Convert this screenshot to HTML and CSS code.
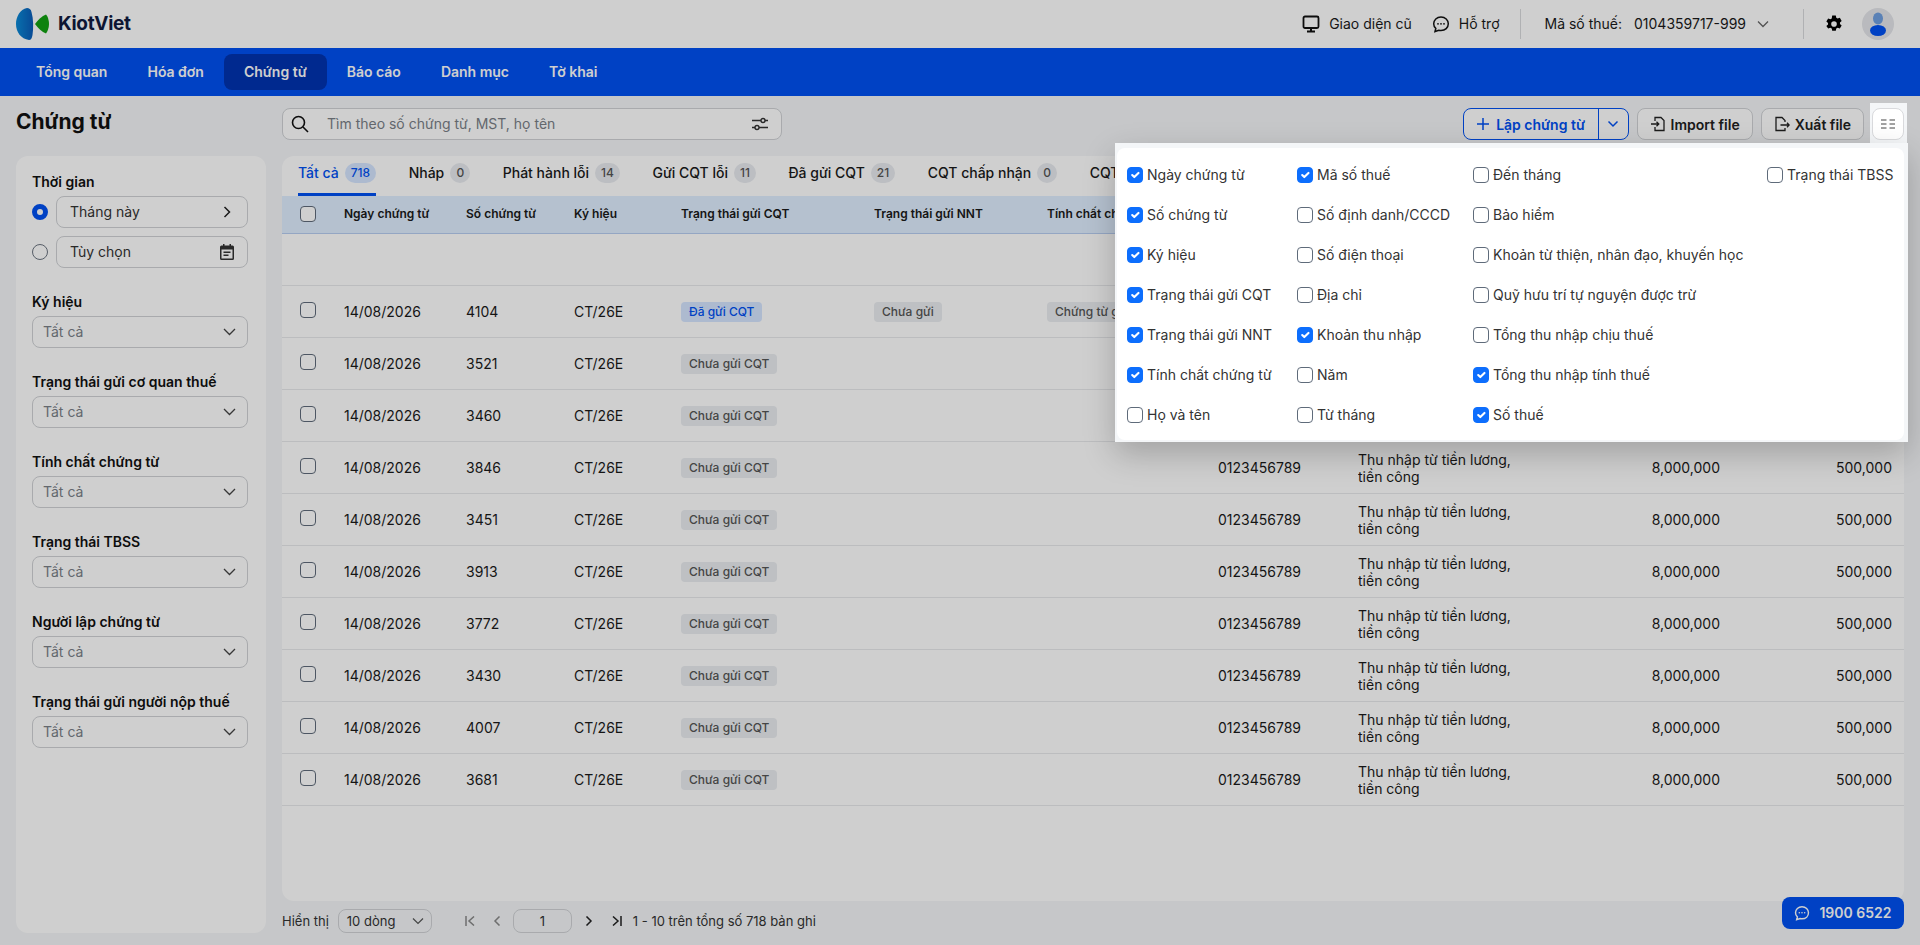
FILE: index.html
```html
<!DOCTYPE html>
<html lang="vi">
<head>
    <meta charset="UTF-8">
    <title>Chứng từ</title>
    <link rel="stylesheet" href="styles.css">
</head>
<body>

    <header class="topbar">
        <div class="logo">
            <svg width="34" height="32" viewBox="0 0 34 32">
                <defs>
                    <linearGradient id="logo-blue" x1="0" y1="0" x2="1" y2="0">
                        <stop offset="0" stop-color="#0a8ad6"/>
                        <stop offset="1" stop-color="#0b5cb8"/>
                    </linearGradient>
                </defs>
                <path fill="url(#logo-blue)" d="M11 0C4 1 0 9 0 16c0 8 5 15 13 16 2 0 3-2 3.500-5 1-7 1-16-1-23C15 1 13 0 11 0z"/>
                <path fill="#12a112" d="M19 16c3-4 7-8 11-9.500 1.500 1.500 3 5.500 3 9.500s-1.500 7.500-3 9.500C26 24 22 20 19 16z"/>
            </svg>
            <span>KiotViet</span>
        </div>
        <div class="topbar-right">
            <a class="top-link">
                <svg width="18" height="18" viewBox="0 0 18 18" fill="none" stroke="#111" stroke-width="1.800"><rect x="1.500" y="1.500" width="15" height="11.500" rx="1.500"/><path d="M9 13v3M5 16.500h8" stroke-width="2"/></svg>
                Giao diện cũ
            </a>
            <a class="top-link">
                <svg width="18" height="18" viewBox="0 0 18 18" fill="none" stroke="#111" stroke-width="1.500"><path d="M9 2c4.200 0 7.300 2.900 7.300 6.800S13.200 15.500 9 15.500c-.8 0-1.500-.1-2.200-.3L3 16.500l.8-3.100C2.400 12.200 1.700 10.600 1.700 8.800 1.700 4.900 4.800 2 9 2z"/><circle cx="6" cy="8.800" r=".9" fill="#111" stroke="none"/><circle cx="9" cy="8.800" r=".9" fill="#111" stroke="none"/><circle cx="12" cy="8.800" r=".9" fill="#111" stroke="none"/></svg>
                Hỗ trợ
            </a>
            <span class="top-divider"></span>
            <div class="tax-code">
                <span>Mã số thuế:</span>
                <span class="tax-number">0104359717-999</span>
                <svg width="12" height="8" viewBox="0 0 12 8" fill="none" stroke="#666" stroke-width="1.300"><path d="M1 1.500l5 5 5-5"/></svg>
            </div>
            <span class="top-divider divider-right"></span>
            <svg class="gear" width="18" height="18" viewBox="0 0 16 16"><path fill="#000" fill-rule="evenodd" d="M6.400.5h3.200l.4 2 1.200.7 2-.7 1.600 2.800-1.500 1.300v1.400l1.500 1.300-1.600 2.800-2-.7-1.200.7-.4 2H6.400l-.4-2-1.200-.7-2 .7L1.200 9.800l1.500-1.300V7.100L1.200 5.800l1.600-2.800 2 .7L6 3zM8 5.500a2.500 2.500 0 1 0 0 5 2.500 2.500 0 0 0 0-5z"/></svg>
            <div class="avatar">
                <svg width="20" height="24" viewBox="0 0 20 24"><ellipse cx="10" cy="6.500" rx="5" ry="6" fill="#6f9fe0"/><ellipse cx="10" cy="18.500" rx="8" ry="5.500" fill="#0051f2"/></svg>
            </div>
        </div>
    </header>

    <nav class="mainnav">
        <a>Tổng quan</a>
        <a>Hóa đơn</a>
        <a class="active">Chứng từ</a>
        <a>Báo cáo</a>
        <a>Danh mục</a>
        <a>Tờ khai</a>
    </nav>

    <div class="page">
        <div class="page-head">
            <h1>Chứng từ</h1>
            <div class="toolbar">
                <div class="search">
                    <svg width="18" height="18" viewBox="0 0 18 18" fill="none" stroke="#111" stroke-width="1.600"><circle cx="7.500" cy="7.500" r="6"/><path d="M12 12l5 5"/></svg>
                    <span class="search-text">Tìm theo số chứng từ, MST, họ tên</span>
                    <svg width="18" height="14" viewBox="0 0 18 14" fill="none" stroke="#333" stroke-width="1.400"><path d="M1 3.500h9M14 3.500h3M1 10.500h3M8 10.500h9"/><circle cx="12" cy="3.500" r="2"/><circle cx="6" cy="10.500" r="2"/></svg>
                </div>
                <div class="actions">
                    <div class="split-btn">
                        <button class="split-main">
                            <svg width="14" height="14" viewBox="0 0 14 14" stroke="#0051f2" stroke-width="1.500"><path d="M7 1v12M1 7h12"/></svg>
                            Lập chứng từ
                        </button>
                        <button class="split-caret">
                            <svg width="12" height="8" viewBox="0 0 12 8" fill="none" stroke="#0051f2" stroke-width="1.500"><path d="M1.500 1.500L6 6l4.500-4.500"/></svg>
                        </button>
                    </div>
                    <button class="btn">
                        <svg width="16" height="16" viewBox="0 0 16 16" fill="none" stroke="#222" stroke-width="1.300"><path d="M5 5V1.500h6l3 3v10H5V11"/><path d="M1 8h7.500M6.500 5.800L8.800 8l-2.300 2.200"/></svg>
                        Import file
                    </button>
                    <button class="btn">
                        <svg width="16" height="16" viewBox="0 0 16 16" fill="none" stroke="#222" stroke-width="1.300"><path d="M11 6V4.500l-3-3H2v13h9V12"/><path d="M6.500 9H15M13 6.800L15.200 9 13 11.200"/></svg>
                        Xuất file
                    </button>
                    <div class="col-btn-wrap">
                        <button class="col-btn">
                            <svg width="14" height="10" viewBox="0 0 14 10" stroke="#444" stroke-width="1"><path d="M0 1h5.500M8.500 1H14M0 5h5.500M8.500 5H14M0 9h5.500M8.500 9H14"/></svg>
                        </button>
                    </div>
                </div>
            </div>
        </div>

        <div class="page-body">
            <aside class="filters">
                <div class="filter-group">
                    <label class="filter-label">Thời gian</label>
                    <div class="radio-row">
                        <span class="radio checked"></span>
                        <div class="field dark">Tháng này
                            <svg class="arrow" width="8" height="12" viewBox="0 0 8 12" fill="none" stroke="#222" stroke-width="1.500"><path d="M1.500 1L6.500 6l-5 5"/></svg>
                        </div>
                    </div>
                    <div class="radio-row">
                        <span class="radio"></span>
                        <div class="field dark">Tùy chọn
                            <svg width="14" height="16" viewBox="0 0 14 16"><path fill="#333" fill-rule="evenodd" d="M3 0h1.500v1.500h5V0H11v1.500h1.500A1.500 1.500 0 0 1 14 3v11.500a1.500 1.500 0 0 1-1.500 1.500h-11A1.500 1.500 0 0 1 0 14.500V3a1.500 1.500 0 0 1 1.500-1.500H3zM1.500 5.500v9h11v-9zM3.500 7.500h7V9h-7zM3.500 10.500h5V12h-5z"/></svg>
                        </div>
                    </div>
                </div>
                <div class="filter-group">
                    <label class="filter-label">Ký hiệu</label>
                    <div class="field">Tất cả
                        <svg width="13" height="8" viewBox="0 0 13 8" fill="none" stroke="#444" stroke-width="1.300"><path d="M1 1l5.500 5.500L12 1"/></svg>
                    </div>
                </div>
                <div class="filter-group">
                    <label class="filter-label">Trạng thái gửi cơ quan thuế</label>
                    <div class="field">Tất cả
                        <svg width="13" height="8" viewBox="0 0 13 8" fill="none" stroke="#444" stroke-width="1.300"><path d="M1 1l5.500 5.500L12 1"/></svg>
                    </div>
                </div>
                <div class="filter-group">
                    <label class="filter-label">Tính chất chứng từ</label>
                    <div class="field">Tất cả
                        <svg width="13" height="8" viewBox="0 0 13 8" fill="none" stroke="#444" stroke-width="1.300"><path d="M1 1l5.500 5.500L12 1"/></svg>
                    </div>
                </div>
                <div class="filter-group">
                    <label class="filter-label">Trạng thái TBSS</label>
                    <div class="field">Tất cả
                        <svg width="13" height="8" viewBox="0 0 13 8" fill="none" stroke="#444" stroke-width="1.300"><path d="M1 1l5.500 5.500L12 1"/></svg>
                    </div>
                </div>
                <div class="filter-group">
                    <label class="filter-label">Người lập chứng từ</label>
                    <div class="field">Tất cả
                        <svg width="13" height="8" viewBox="0 0 13 8" fill="none" stroke="#444" stroke-width="1.300"><path d="M1 1l5.500 5.500L12 1"/></svg>
                    </div>
                </div>
                <div class="filter-group">
                    <label class="filter-label">Trạng thái gửi người nộp thuế</label>
                    <div class="field">Tất cả
                        <svg width="13" height="8" viewBox="0 0 13 8" fill="none" stroke="#444" stroke-width="1.300"><path d="M1 1l5.500 5.500L12 1"/></svg>
                    </div>
                </div>
            </aside>

            <main class="content">
                <div class="card">
                    <div class="tabs">
                        <a class="tab active">Tất cả <span class="count">718</span></a>
                        <a class="tab">Nháp <span class="count">0</span></a>
                        <a class="tab">Phát hành lỗi <span class="count">14</span></a>
                        <a class="tab">Gửi CQT lỗi <span class="count">11</span></a>
                        <a class="tab">Đã gửi CQT <span class="count">21</span></a>
                        <a class="tab">CQT chấp nhận <span class="count">0</span></a>
                        <a class="tab">CQT từ chối <span class="count">0</span></a>
                    </div>
                    <table class="grid">
                        <colgroup>
                            <col class="c-check"><col class="c-date"><col class="c-no"><col class="c-sign">
                            <col class="c-cqt"><col class="c-nnt"><col class="c-kind"><col class="c-mst">
                            <col class="c-income"><col class="c-total"><col class="c-tax">
                        </colgroup>
                        <thead>
                            <tr>
                                <th class="cell-check"><input type="checkbox"></th>
                                <th>Ngày chứng từ</th>
                                <th>Số chứng từ</th>
                                <th>Ký hiệu</th>
                                <th>Trạng thái gửi CQT</th>
                                <th>Trạng thái gửi NNT</th>
                                <th>Tính chất chứng từ</th>
                                <th>Mã số thuế</th>
                                <th>Khoản thu nhập</th>
                                <th class="num">Tổng thu nhập tính thuế</th>
                                <th class="num">Số thuế</th>
                            </tr>
                        </thead>
                        <tbody>
                            <tr class="filter-row"><td colspan="11"></td></tr>
                            <tr>
                                <td class="cell-check"><input type="checkbox"></td>
                                <td>14/08/2026</td><td>4104</td><td>CT/26E</td>
                                <td><span class="tag blue">Đã gửi CQT</span></td>
                                <td><span class="tag">Chưa gửi</span></td>
                                <td><span class="tag">Chứng từ gốc</span></td>
                                <td>0123456789</td>
                                <td>Thu nhập từ tiền lương,<br>tiền công</td>
                                <td class="num">8,000,000</td><td class="num">500,000</td>
                            </tr>
                            <tr>
                                <td class="cell-check"><input type="checkbox"></td>
                                <td>14/08/2026</td><td>3521</td><td>CT/26E</td>
                                <td><span class="tag">Chưa gửi CQT</span></td><td></td><td></td>
                                <td>0123456789</td>
                                <td>Thu nhập từ tiền lương,<br>tiền công</td>
                                <td class="num">8,000,000</td><td class="num">500,000</td>
                            </tr>
                            <tr>
                                <td class="cell-check"><input type="checkbox"></td>
                                <td>14/08/2026</td><td>3460</td><td>CT/26E</td>
                                <td><span class="tag">Chưa gửi CQT</span></td><td></td><td></td>
                                <td>0123456789</td>
                                <td>Thu nhập từ tiền lương,<br>tiền công</td>
                                <td class="num">8,000,000</td><td class="num">500,000</td>
                            </tr>
                            <tr>
                                <td class="cell-check"><input type="checkbox"></td>
                                <td>14/08/2026</td><td>3846</td><td>CT/26E</td>
                                <td><span class="tag">Chưa gửi CQT</span></td><td></td><td></td>
                                <td>0123456789</td>
                                <td>Thu nhập từ tiền lương,<br>tiền công</td>
                                <td class="num">8,000,000</td><td class="num">500,000</td>
                            </tr>
                            <tr>
                                <td class="cell-check"><input type="checkbox"></td>
                                <td>14/08/2026</td><td>3451</td><td>CT/26E</td>
                                <td><span class="tag">Chưa gửi CQT</span></td><td></td><td></td>
                                <td>0123456789</td>
                                <td>Thu nhập từ tiền lương,<br>tiền công</td>
                                <td class="num">8,000,000</td><td class="num">500,000</td>
                            </tr>
                            <tr>
                                <td class="cell-check"><input type="checkbox"></td>
                                <td>14/08/2026</td><td>3913</td><td>CT/26E</td>
                                <td><span class="tag">Chưa gửi CQT</span></td><td></td><td></td>
                                <td>0123456789</td>
                                <td>Thu nhập từ tiền lương,<br>tiền công</td>
                                <td class="num">8,000,000</td><td class="num">500,000</td>
                            </tr>
                            <tr>
                                <td class="cell-check"><input type="checkbox"></td>
                                <td>14/08/2026</td><td>3772</td><td>CT/26E</td>
                                <td><span class="tag">Chưa gửi CQT</span></td><td></td><td></td>
                                <td>0123456789</td>
                                <td>Thu nhập từ tiền lương,<br>tiền công</td>
                                <td class="num">8,000,000</td><td class="num">500,000</td>
                            </tr>
                            <tr>
                                <td class="cell-check"><input type="checkbox"></td>
                                <td>14/08/2026</td><td>3430</td><td>CT/26E</td>
                                <td><span class="tag">Chưa gửi CQT</span></td><td></td><td></td>
                                <td>0123456789</td>
                                <td>Thu nhập từ tiền lương,<br>tiền công</td>
                                <td class="num">8,000,000</td><td class="num">500,000</td>
                            </tr>
                            <tr>
                                <td class="cell-check"><input type="checkbox"></td>
                                <td>14/08/2026</td><td>4007</td><td>CT/26E</td>
                                <td><span class="tag">Chưa gửi CQT</span></td><td></td><td></td>
                                <td>0123456789</td>
                                <td>Thu nhập từ tiền lương,<br>tiền công</td>
                                <td class="num">8,000,000</td><td class="num">500,000</td>
                            </tr>
                            <tr>
                                <td class="cell-check"><input type="checkbox"></td>
                                <td>14/08/2026</td><td>3681</td><td>CT/26E</td>
                                <td><span class="tag">Chưa gửi CQT</span></td><td></td><td></td>
                                <td>0123456789</td>
                                <td>Thu nhập từ tiền lương,<br>tiền công</td>
                                <td class="num">8,000,000</td><td class="num">500,000</td>
                            </tr>
                        </tbody>
                    </table>
                </div>

                <div class="pager">
                    <span>Hiển thị</span>
                    <div class="pager-select">10 dòng
                        <svg width="12" height="8" viewBox="0 0 12 8" fill="none" stroke="#555" stroke-width="1.200"><path d="M1 1.500l5 5 5-5"/></svg>
                    </div>
                    <svg class="pager-first" width="10" height="10" viewBox="0 0 10 10" fill="none" stroke="#888" stroke-width="1.500"><path d="M1 0v10M9 .5L4 5l5 4.500"/></svg>
                    <svg class="pager-prev" width="8" height="10" viewBox="0 0 8 10" fill="none" stroke="#888" stroke-width="1.500"><path d="M6.500.5L2 5l4.500 4.500"/></svg>
                    <div class="pager-input">1</div>
                    <svg class="pager-next" width="8" height="10" viewBox="0 0 8 10" fill="none" stroke="#222" stroke-width="1.500"><path d="M1.500.5L6 5 1.500 9.500"/></svg>
                    <svg class="pager-last" width="10" height="10" viewBox="0 0 10 10" fill="none" stroke="#222" stroke-width="1.500"><path d="M9 0v10M1 .5L6 5 1 9.500"/></svg>
                    <span class="pager-total">1 - 10 trên tổng số 718 bản ghi</span>
                </div>
            </main>
        </div>
    </div>

    <a class="hotline">
        <svg width="16" height="16" viewBox="0 0 18 18" fill="none" stroke="#fff" stroke-width="1.600"><path d="M9 2c4.200 0 7.300 2.900 7.300 6.800S13.200 15.500 9 15.500c-.8 0-1.500-.1-2.200-.3L3 16.500l.8-3.100C2.400 12.200 1.700 10.600 1.700 8.800 1.700 4.900 4.800 2 9 2z"/><circle cx="6" cy="8.800" r=".9" fill="#fff" stroke="none"/><circle cx="9" cy="8.800" r=".9" fill="#fff" stroke="none"/><circle cx="12" cy="8.800" r=".9" fill="#fff" stroke="none"/></svg>
        1900 6522
    </a>

    <div class="backdrop"></div>

    <div class="column-menu">
        <div class="column-list">
            <label><input type="checkbox" checked> Ngày chứng từ</label>
            <label><input type="checkbox" checked> Số chứng từ</label>
            <label><input type="checkbox" checked> Ký hiệu</label>
            <label><input type="checkbox" checked> Trạng thái gửi CQT</label>
            <label><input type="checkbox" checked> Trạng thái gửi NNT</label>
            <label><input type="checkbox" checked> Tính chất chứng từ</label>
            <label><input type="checkbox"> Họ và tên</label>

            <label><input type="checkbox" checked> Mã số thuế</label>
            <label><input type="checkbox"> Số định danh/CCCD</label>
            <label><input type="checkbox"> Số điện thoại</label>
            <label><input type="checkbox"> Địa chỉ</label>
            <label><input type="checkbox" checked> Khoản thu nhập</label>
            <label><input type="checkbox"> Năm</label>
            <label><input type="checkbox"> Từ tháng</label>

            <label><input type="checkbox"> Đến tháng</label>
            <label><input type="checkbox"> Bảo hiểm</label>
            <label><input type="checkbox"> Khoản từ thiện, nhân đạo, khuyến học</label>
            <label><input type="checkbox"> Quỹ hưu trí tự nguyện được trừ</label>
            <label><input type="checkbox"> Tổng thu nhập chịu thuế</label>
            <label><input type="checkbox" checked> Tổng thu nhập tính thuế</label>
            <label><input type="checkbox" checked> Số thuế</label>

            <label><input type="checkbox"> Trạng thái TBSS</label>
        </div>
    </div>

</body>
</html>
```

FILE: styles.css
```css
* {
    margin: 0;
    padding: 0;
    box-sizing: border-box;
}

html, body {
    height: 100%;
}

body {
    font-family: 'Inter', 'Noto Sans', sans-serif;
    font-size: 14px;
    line-height: 20px;
    color: #1a1a1a;
    background: #f4f6f8;
    display: flex;
    flex-direction: column;
    overflow: hidden;
}

button {
    font-family: inherit;
}

/* Thanh trên cùng */
.topbar {
    height: 48px;
    flex: none;
    background: #fff;
    display: flex;
    align-items: center;
    justify-content: space-between;
    padding: 0 26px 0 16px;
}

.logo {
    display: flex;
    align-items: center;
    gap: 8px;
}

.logo span {
    font-size: 19px;
    font-weight: 700;
    color: #101b3f;
    letter-spacing: -0.3px;
}

.topbar-right {
    display: flex;
    align-items: center;
}

.top-link {
    display: flex;
    align-items: center;
    gap: 9px;
    margin-right: 20px;
}

.top-divider {
    width: 1px;
    height: 30px;
    background: #d9dadd;
    margin-right: 24px;
}

.divider-right {
    margin-right: 21px;
}

.tax-code {
    display: flex;
    align-items: center;
    margin-right: 34px;
}

.tax-number {
    margin: 0 11px 0 12px;
}

.avatar {
    width: 32px;
    height: 32px;
    border-radius: 50%;
    background: #e4e6ea;
    margin-left: 19px;
    display: flex;
    align-items: center;
    justify-content: center;
}

/* Menu chính */
.mainnav {
    height: 48px;
    flex: none;
    background: #0051f2;
    display: flex;
    align-items: center;
    padding-left: 16px;
}

.mainnav a {
    height: 36px;
    padding: 0 20px;
    display: flex;
    align-items: center;
    color: #fff;
    font-weight: 600;
    border-radius: 8px;
}

.mainnav a.active {
    background: #0033b0;
}

/* Nội dung trang */
.page {
    flex: 1;
    min-height: 0;
    display: flex;
    flex-direction: column;
    padding: 12px 16px;
}

.page-head {
    display: flex;
    height: 32px;
    flex: none;
}

.page-head h1 {
    width: 266px;
    font-size: 21px;
    font-weight: 700;
    line-height: 28px;
    color: #111;
}

.toolbar {
    flex: 1;
    display: flex;
    justify-content: space-between;
}

.search {
    width: 500px;
    height: 32px;
    background: #fff;
    border: 1px solid #d0d2d6;
    border-radius: 8px;
    display: flex;
    align-items: center;
    padding: 0 12px 0 8px;
}

.search-text {
    flex: 1;
    margin-left: 18px;
    color: #7a7f87;
}

.actions {
    display: flex;
    gap: 8px;
}

.split-btn {
    display: flex;
    height: 32px;
    border: 1px solid #0051f2;
    border-radius: 8px;
    background: #fff;
}

.split-btn button {
    border: 0;
    background: none;
    height: 30px;
    display: flex;
    align-items: center;
    justify-content: center;
}

.split-main {
    width: 135px;
    gap: 6px;
    color: #0051f2;
    font-size: 14px;
    font-weight: 600;
    border-right: 1px solid #0051f2 !important;
}

.split-caret {
    width: 29px;
}

.btn {
    height: 32px;
    display: flex;
    align-items: center;
    justify-content: center;
    gap: 5px;
    padding: 0 12px;
    background: #fff;
    border: 1px solid #d0d2d6;
    border-radius: 8px;
    font-size: 14px;
    font-weight: 600;
    color: #222;
}

.col-btn-wrap {
    position: relative;
    z-index: 20;
    background: #f4f6f8;
    padding: 5px 3px 3px 2px;
    margin: -5px -3px -3px -2px;
    height: 40px;
}

.col-btn {
    width: 32px;
    height: 32px;
    background: #fff;
    border: 1px solid #d9dadd;
    border-radius: 8px;
    display: flex;
    align-items: center;
    justify-content: center;
}

.page-body {
    flex: 1;
    min-height: 0;
    display: flex;
    gap: 16px;
    margin-top: 16px;
}

/* Bộ lọc bên trái */
.filters {
    width: 250px;
    flex: none;
    background: #fff;
    border-radius: 12px;
    padding: 16px 18px 0 16px;
    display: flex;
    flex-direction: column;
    gap: 24px;
}

.filter-group {
    display: flex;
    flex-direction: column;
    gap: 4px;
}

.filter-label {
    font-weight: 600;
    color: #111;
}

.radio-row {
    display: flex;
    align-items: center;
    gap: 8px;
    margin-bottom: 4px;
}

.radio-row:last-child {
    margin-bottom: 0;
}

.radio {
    width: 16px;
    height: 16px;
    flex: none;
    border-radius: 50%;
    border: 1px solid #6b7480;
    background: #fff;
}

.radio.checked {
    border: 5px solid #0051f2;
}

.field {
    flex: none;
    height: 32px;
    border: 1px solid #d0d2d6;
    border-radius: 8px;
    background: #fff;
    display: flex;
    align-items: center;
    justify-content: space-between;
    padding: 0 11px 0 10px;
    color: #7a7f87;
}

.radio-row .field {
    flex: 1;
}

.field.dark {
    color: #333;
    padding-left: 13px;
    padding-right: 13px;
}

.field .arrow {
    margin-right: 3px;
}

/* Bảng */
.content {
    flex: 1;
    min-width: 0;
    display: flex;
    flex-direction: column;
    gap: 8px;
}

.card {
    flex: 1;
    min-height: 0;
    background: #fff;
    border-radius: 12px;
    overflow: hidden;
}

.tabs {
    height: 40px;
    display: flex;
    gap: 32.5px;
    padding-left: 16px;
}

.tab {
    height: 40px;
    display: flex;
    align-items: center;
    gap: 6px;
    padding: 0 0 4px 0;
    font-weight: 500;
    white-space: nowrap;
    color: #1a1a1a;
    border-bottom: 3px solid transparent;
}

.tab.active {
    color: #0051f2;
    border-bottom-color: #0051f2;
}

.count {
    height: 20px;
    min-width: 20px;
    padding: 0 6px;
    border-radius: 10px;
    background: #e8ebef;
    color: #555;
    font-size: 12px;
    font-weight: 500;
    text-align: center;
}

.tab.active .count {
    background: #d6e6ff;
    color: #0051f2;
}

.grid {
    width: 1622px;
    table-layout: fixed;
    border-collapse: collapse;
}

.c-check { width: 62px; }
.c-date { width: 122px; }
.c-no { width: 108px; }
.c-sign { width: 107px; }
.c-cqt { width: 193px; }
.c-nnt { width: 173px; }
.c-kind { width: 171px; }
.c-mst { width: 140px; }
.c-income { width: 200px; }
.c-total { width: 174px; }
.c-tax { width: 172px; }

.grid th {
    height: 37px;
    background: #dfeeff;
    border-bottom: 1px solid #b7cdf0;
    text-align: left;
    font-size: 12px;
    font-weight: 600;
    white-space: nowrap;
    overflow: hidden;
}

.grid td {
    height: 52px;
    padding-top: 1px;
    border-bottom: 1px solid #e8e9ec;
    line-height: 17px;
    white-space: nowrap;
    overflow: hidden;
}

.grid .num {
    text-align: right;
    padding-right: 12px;
}

.grid .cell-check {
    padding-left: 18px;
    padding-top: 0;
}

.grid td.cell-check input {
    margin-bottom: 3px;
}

input[type="checkbox"] {
    appearance: none;
    display: block;
    width: 16px;
    height: 16px;
    flex: none;
    border: 1px solid #5f6b7a;
    border-radius: 4px;
    background: #fff;
}

input[type="checkbox"]:checked {
    background: #0d6efd url("data:image/svg+xml,%3csvg xmlns='http://www.w3.org/2000/svg' viewBox='0 0 20 20'%3e%3cpath fill='none' stroke='%23fff' stroke-linecap='round' stroke-linejoin='round' stroke-width='3' d='m6 10 3 3 6-6'/%3e%3c/svg%3e") center / 100% no-repeat;
    border-color: #0d6efd;
}

.tag {
    display: inline-block;
    height: 20px;
    padding: 0 8px;
    border-radius: 4px;
    background: #eaedf1;
    color: #555;
    font-size: 12px;
    font-weight: 500;
    line-height: 20px;
    white-space: nowrap;
    vertical-align: middle;
}

.tag.blue {
    background: #d6e6ff;
    color: #0051f2;
}

/* Phân trang */
.pager {
    height: 24px;
    flex: none;
    display: flex;
    align-items: center;
    color: #333;
    font-size: 13px;
}

.pager-select {
    width: 94px;
    height: 24px;
    margin: 0 33px 0 9px;
    border: 1px solid #d0d2d6;
    border-radius: 8px;
    display: flex;
    align-items: center;
    justify-content: space-between;
    padding: 0 7px 0 8px;
}

.pager-prev {
    margin: 0 12px 0 18px;
}

.pager-input {
    width: 59px;
    height: 24px;
    border: 1px solid #d0d2d6;
    border-radius: 8px;
    text-align: center;
    line-height: 22px;
}

.pager-next {
    margin: 0 19px 0 13px;
}

.pager-total {
    margin-left: 11px;
}

/* Nút gọi hỗ trợ */
.hotline {
    position: absolute;
    right: 16px;
    bottom: 16px;
    width: 122px;
    height: 32px;
    background: #0051f2;
    color: #fff;
    border-radius: 8px;
    display: flex;
    align-items: center;
    justify-content: center;
    gap: 9px;
    font-weight: 600;
}

/* Lớp phủ và bảng chọn cột */
.backdrop {
    position: fixed;
    inset: 0;
    background: rgba(0, 0, 0, 0.19);
    z-index: 10;
}

.column-menu {
    position: absolute;
    top: 143px;
    left: 1115px;
    width: 793px;
    height: 299px;
    z-index: 20;
    background: #f4f6f8;
    padding: 5px 4px 2px 2px;
    box-shadow: 0 12px 30px rgba(0, 0, 0, 0.22);
}

.column-list {
    height: 292px;
    background: #fff;
    border-radius: 8px;
    padding: 7px 0 0 10px;
    display: grid;
    grid-auto-flow: column;
    grid-template-rows: repeat(7, 40px);
    grid-template-columns: 170px 176px 294px auto;
}

.column-list label {
    display: flex;
    align-items: center;
    gap: 4px;
    color: #333;
    white-space: nowrap;
}
```
